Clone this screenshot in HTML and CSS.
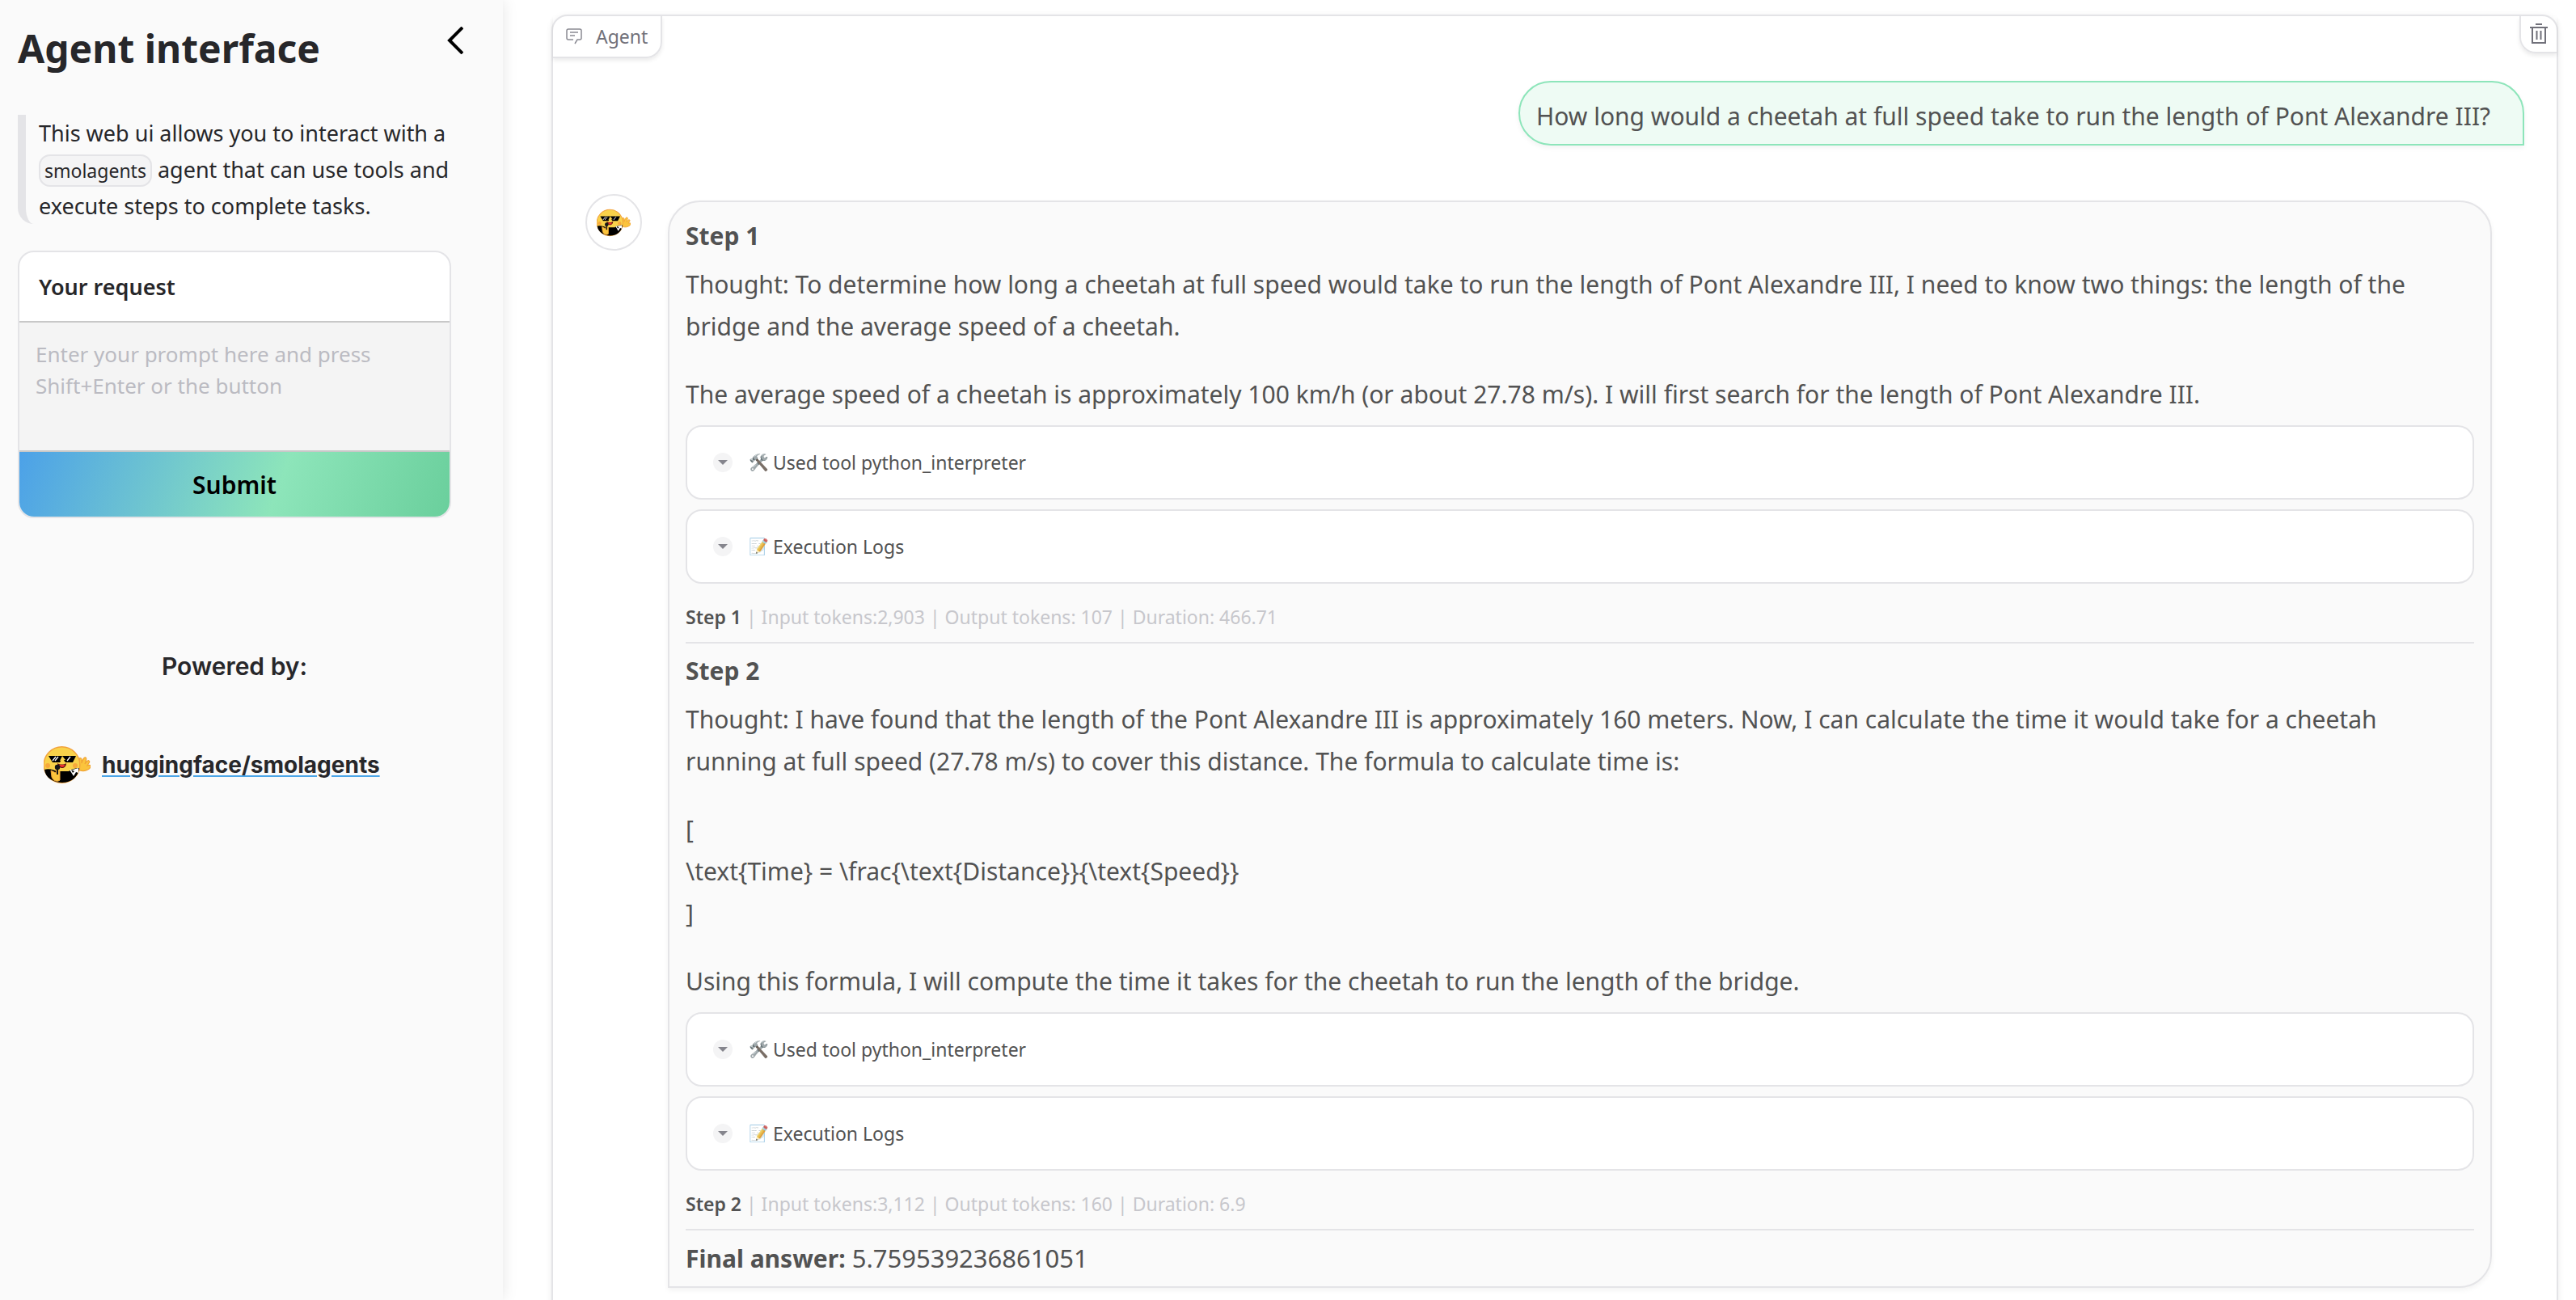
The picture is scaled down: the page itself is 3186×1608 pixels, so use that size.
FILE: index.html
```html
<!DOCTYPE html>
<html lang="en">
<head>
<meta charset="utf-8">
<title>Agent interface</title>
<link rel="stylesheet" href="styles.css">
</head>
<body>
<svg width="0" height="0" class="sprite" aria-hidden="true">
  <symbol id="mascot" viewBox="0 0 58 48">
    <g fill="#fbc43c" stroke="#f0a335" stroke-width="1.2">
      <path d="M43 30c1-4 1-9 1-14 2-1 3 0 3 2l0 4c1-4 3-8 5-7s0 5-1 8c2-3 4-5 5-4 2 1-1 4-2 6 2-1 4-1 4 1 0 3-8 8-15 4z"/>
    </g>
    <circle cx="22.500" cy="24" r="22.300" fill="#f9d24a" stroke="#f2a23c" stroke-width="1.400"/>
    <path d="M1 30c6-2 12 1 16 2h14c4-3 8-4 13-4-1 11-10 18-21 18S2 40 1 30z" fill="#000"/>
    <path d="M32 30l5 8 3-5 3 1 0-6-7 2z" fill="#fff"/>
    <path d="M34 30l2 4 2-2z" fill="#000"/>
    <path d="M6 13h34l-4 8h-9l-4-5-3 5h-9z" fill="#000"/>
    <path d="M20 19l3-6 4 5z" fill="#f9d24a"/>
    <path d="M11 19l4-5M14 19l4-5M29 19l4-5" stroke="#fff" stroke-width="1.300"/>
    <path d="M17 22c3 2 8 2 11 0 0 4-3 6-5 6s-6-2-6-6z" fill="#5e1010"/>
    <path d="M19 24h7c0 2-2 3-3 3s-3-1-4-3z" fill="#f0322e"/>
    <circle cx="5" cy="25" r="3" fill="#f7a83c"/>
    <circle cx="39" cy="25" r="3" fill="#f7a83c"/>
    <path d="M9 31l6 3 1-4 4 2v11c-4 3-9 0-10-4z" fill="#fbc43c" stroke="#f0a335"/>
    <circle cx="17" cy="27" r="3.200" fill="#171717"/>
    <path d="M17 29v7" stroke="#171717" stroke-width="2"/>
  </symbol>
</svg>

<div class="app">
  <aside class="sidebar">
    <header class="sidebar-head">
      <h1>Agent interface</h1>
      <button class="collapse" type="button" aria-label="Close sidebar">
        <svg width="20" height="34" viewBox="0 0 20 34" fill="none" stroke="#000" stroke-width="4"><path d="M19 1L3 17l16 16"/></svg>
      </button>
    </header>
    <div class="sidebar-body">
      <blockquote class="intro">This web ui allows you to interact with a <code>smolagents</code> agent that can use tools and execute steps to complete tasks.</blockquote>
      <form class="request">
        <label for="prompt">Your request</label>
        <textarea id="prompt" placeholder="Enter your prompt here and press Shift+Enter or the button"></textarea>
        <button type="button">Submit</button>
      </form>
      <p class="powered">Powered by:</p>
      <div class="credit">
        <svg width="58" height="48"><use href="#mascot"/></svg>
        <a href="#smolagents">huggingface/smolagents</a>
      </div>
    </div>
  </aside>

  <main class="main">
    <section class="panel">
      <header class="panel-head">
        <div class="tab">
          <svg width="20" height="20" viewBox="0 0 20 20" fill="none" stroke="#8b8b93" stroke-width="1.500"><path d="M9 14H3a2 2 0 0 1-2-2V3a2 2 0 0 1 2-2h14a2 2 0 0 1 2 2v9a2 2 0 0 1-2 2h-3l-3 5M5 5h10M5 9h6"/></svg>
          <span>Agent</span>
        </div>
        <button class="clear" type="button" aria-label="Clear">
          <svg width="22" height="26" viewBox="0 0 22 26" fill="none" stroke="#71717a" stroke-width="2"><path d="M7 1h8M0 5h22M3 5v19h16V5M8.500 9v11M13.500 9v11"/></svg>
        </button>
      </header>

      <div class="bubble user"><p>How long would a cheetah at full speed take to run the length of Pont Alexandre III?</p></div>

      <div class="reply">
        <div class="avatar"><svg width="42" height="35"><use href="#mascot"/></svg></div>
        <article class="bubble agent">
          <p class="step"><strong>Step 1</strong></p>
          <p>Thought: To determine how long a cheetah at full speed would take to run the length of Pont Alexandre III, I need to know two things: the length of the<br>bridge and the average speed of a cheetah.</p>
          <p class="next">The average speed of a cheetah is approximately 100 km/h (or about 27.78 m/s). I will first search for the length of Pont Alexandre III.</p>
          <div class="tools">
            <button type="button"><i class="caret"></i><span class="emoji steel">🛠️</span><span>Used tool python_interpreter</span></button>
            <button type="button"><i class="caret"></i><span class="emoji">📝</span><span>Execution Logs</span></button>
          </div>
          <p class="stats"><strong>Step 1</strong> | Input tokens:2,903 | Output tokens: 107 | Duration: 466.71</p>
          <hr>
          <p class="step"><strong>Step 2</strong></p>
          <p>Thought: I have found that the length of the Pont Alexandre III is approximately 160 meters. Now, I can calculate the time it would take for a cheetah<br>running at full speed (27.78 m/s) to cover this distance. The formula to calculate time is:</p>
          <p class="next">[<br>\text{Time} = \frac{\text{Distance}}{\text{Speed}}<br>]</p>
          <p class="next">Using this formula, I will compute the time it takes for the cheetah to run the length of the bridge.</p>
          <div class="tools">
            <button type="button"><i class="caret"></i><span class="emoji steel">🛠️</span><span>Used tool python_interpreter</span></button>
            <button type="button"><i class="caret"></i><span class="emoji">📝</span><span>Execution Logs</span></button>
          </div>
          <p class="stats"><strong>Step 2</strong> | Input tokens:3,112 | Output tokens: 160 | Duration: 6.9</p>
          <hr>
          <p class="answer"><strong>Final answer:</strong> 5.759539236861051</p>
        </article>
      </div>
    </section>
  </main>
</div>
</body>
</html>
```
FILE: styles.css
```css
* { box-sizing: border-box; }
body { margin: 0; font-family: "Noto Sans", sans-serif; color: #27272a; background: #fff; }
h1, p, blockquote { margin: 0; }
button, textarea { font-family: inherit; margin: 0; padding: 0; border: 0; }
svg { display: block; flex: none; }
.sprite { position: absolute; }

.app { display: flex; height: 100vh; overflow: hidden; }

/* Sidebar */
.sidebar { flex: none; width: 622px; padding: 28px 49px 28px 22px; background: #fafafa; box-shadow: 0 0 18px rgba(0, 0, 0, .1); }
.sidebar-head { display: flex; justify-content: space-between; align-items: flex-start; }
h1 { font-size: 48px; line-height: 64px; font-weight: 700; }
.collapse { height: 44px; background: none; }
.sidebar-body { margin-right: 15px; }
.intro { margin-top: 50px; padding-left: 16px; border-left: 10px solid #e4e4e7; border-radius: 0 0 0 20px; font-size: 27px; line-height: 45px; }
.intro code { padding: 2px 5px; border: 2px solid #e4e4e7; border-radius: 14px; background: #f4f4f5; font: 23px/32px "Noto Sans", sans-serif; }
.request { display: flex; flex-direction: column; margin-top: 33px; border: 2px solid #e4e4e7; border-radius: 20px; background: #fff; overflow: hidden; }
.request label { padding: 0 24px; font-size: 27px; line-height: 85px; font-weight: 600; border-bottom: 2px solid #c8c8c8; }
.request textarea { height: 160px; padding: 20px; resize: none; background: #f4f4f4; border-bottom: 2px solid #c8c8c8; border-radius: 0; font-size: 26px; line-height: 39px; color: #27272a; }
.request textarea::placeholder { color: #bbbbc2; opacity: 1; }
.request button { height: 80px; font-size: 30px; font-weight: 600; color: #000; background: linear-gradient(110deg, #4ca1e8 0%, #8de5ba 60%, #6acf9c 100%); }
.powered { margin-top: 163px; font: 600 30px/40px Inter, sans-serif; text-align: center; }
.credit { display: flex; align-items: center; gap: 14px; margin-top: 78px; padding-left: 32px; }
.credit a { font: 700 28px/48px Inter, sans-serif; color: inherit; text-decoration: underline 2px #4ca6e8; text-underline-offset: 3px; }

/* Chat panel */
.main { flex: 1; min-width: 0; padding: 18px 22px 0 60px; }
.panel { border: 2px solid #e4e4e7; border-radius: 20px; background: #fff; box-shadow: 0 2px 8px rgba(0, 0, 0, .08); padding-bottom: 40px; }
.panel-head { display: flex; justify-content: space-between; align-items: flex-start; margin-bottom: 28px; }
.tab { display: flex; align-items: center; gap: 17px; height: 52px; padding: 0 16px; border: solid #e4e4e7; border-width: 0 2px 2px 0; border-radius: 0 0 20px 0; box-shadow: 0 3px 5px rgba(0, 0, 0, .08); font-size: 23px; line-height: 32px; color: #71717a; }
.clear { display: flex; align-items: center; justify-content: center; width: 46px; height: 46px; background: none; border: solid #e4e4e7; border-width: 0 0 2px 2px; border-radius: 0 0 0 20px; box-shadow: 0 3px 5px rgba(0, 0, 0, .08); }
.bubble { padding: 16px 20px 8px; border: 2px solid #e4e4e7; background: #fafafa; color: #525252; font-size: 30px; line-height: 52px; box-shadow: 0 3px 6px rgba(0, 0, 0, .05); }
.user { width: fit-content; min-width: 1244px; margin: 0 40px 0 auto; border-color: #8de5ba; border-radius: 40px 40px 0 40px; background: #eefbf4; }
.reply { display: flex; align-items: flex-start; gap: 32px; margin: 60px 80px 0 40px; }
.avatar { flex: none; display: flex; align-items: center; justify-content: center; width: 70px; height: 70px; border: 2px solid #e4e4e7; border-radius: 50%; }
.agent { flex: 1; min-width: 0; margin-top: 8px; border-radius: 40px 40px 40px 0; }
strong { font-weight: 700; }
.step { margin-bottom: 8px; }
.next { margin-top: 32px; }
.answer { font-size: 31px; }
.answer strong { font-size: 30px; }
.tools { display: grid; gap: 12px; margin: 12px 0 22px; }
.tools button { display: flex; align-items: center; height: 92px; padding: 0 32px; border: 2px solid #e4e4e7; border-radius: 20px; background: #fff; color: #525252; font-size: 23px; line-height: 38px; }
.caret { display: flex; align-items: center; justify-content: center; width: 24px; height: 24px; margin-right: 20px; border-radius: 50%; background: #f4f4f5; }
.caret::before { content: ""; border: solid transparent; border-width: 6px 6px 0; border-top-color: #85858d; }
.emoji { width: 30px; font-size: 20px; text-align: left; filter: grayscale(.3); }
.emoji.steel { filter: grayscale(.8); }
.stats { font-size: 23px; line-height: 38px; color: #c7c7cc; }
.stats strong { font-weight: 600; color: #525252; }
hr { height: 2px; margin: 12px 0 8px; border: 0; background: #e4e4e7; }
```
